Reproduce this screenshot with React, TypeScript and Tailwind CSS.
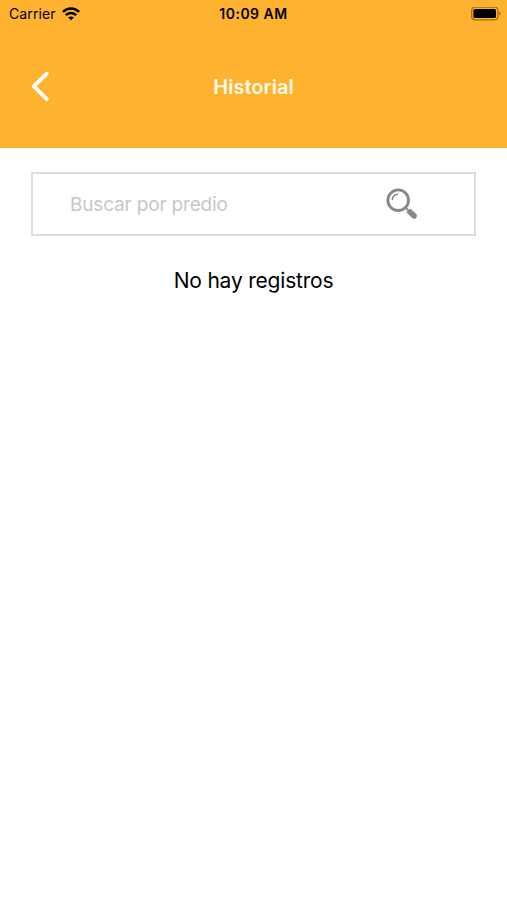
import { useState } from "react";

const WifiIcon = () => (
  <svg width="18" height="14" viewBox="0 0 18 14" fill="none" stroke="#000" strokeWidth="2.5">
    <path d="M0.9 4.9C5.5 0.2 12.5 0.2 17.1 4.9" />
    <path d="M3.8 8.1C6.8 5.2 11.2 5.2 14.2 8.1" />
    <path d="M9 13.3L6.2 10.5C7.8 9 10.2 9 11.8 10.5Z" fill="#000" stroke="none" />
  </svg>
);

const BatteryIcon = () => (
  <svg width="31" height="14" viewBox="0 0 31 14">
    <rect x="0.7" y="0.2" width="26.2" height="12.6" rx="3.4" fill="none" stroke="#000" strokeOpacity="0.4" strokeWidth="1.2" />
    <rect x="2.4" y="1.9" width="22.6" height="9.2" rx="1.7" fill="#000" />
    <path d="M28.3 4.4C29.9 5 29.9 8 28.3 8.6Z" fill="#000" fillOpacity="0.45" />
  </svg>
);

const BackIcon = () => (
  <svg width="20" height="32" viewBox="0 0 20 32" fill="none" stroke="#fff" strokeWidth="3.8" strokeLinecap="round" strokeLinejoin="round">
    <path d="M16.8 2.7L3.8 15.4L16.8 28.2" />
  </svg>
);

const SearchIcon = () => (
  <svg width="32" height="32" viewBox="0 0 32 32" fill="none" stroke="#888" strokeLinecap="round">
    <circle cx="12.2" cy="12.2" r="10.3" strokeWidth="2.9" />
    <path d="M6.3 11.4C6.7 8.6 8.7 6.7 11.3 6.3" strokeWidth="1.6" />
    <path d="M19.6 19.6L22 22" strokeWidth="1.8" />
    <path d="M20.4 24.2L24.2 20.4L30.3 26.1C32.2 28.8 29.2 32 26.4 30.3Z" fill="#888" stroke="none" />
  </svg>
);

const StatusBar = () => (
  <div className="grid h-7 grid-cols-3 items-center pl-[9px] pr-[5px] text-black">
    <div className="flex items-center gap-1.5">
      <span className="text-[14px] leading-none tracking-[0.1px]">Carrier</span>
      <WifiIcon />
    </div>
    <span className="-ml-1 text-center text-[14px] leading-none font-semibold tracking-[0.5px]">10:09 AM</span>
    <div className="flex justify-end">
      <BatteryIcon />
    </div>
  </div>
);

export default function App() {
  const [query, setQuery] = useState("");

  return (
    <div className="h-[900px] w-full bg-white font-['Inter','Liberation_Sans',sans-serif]">
      <header className="h-[148px] bg-[#ffb230]">
        <StatusBar />
        <div className="grid h-[117px] grid-cols-[1fr_auto_1fr] items-center px-[30px]">
          <button aria-label="Volver" className="justify-self-start">
            <BackIcon />
          </button>
          <h1 className="text-[20px] leading-none font-semibold text-[#fffbea]">Historial</h1>
        </div>
      </header>

      <main className="px-[31px] pt-6">
        <div className="flex h-16 items-center border-2 border-[#dedede] pl-[37px] pr-[56px]">
          <input
            value={query}
            onChange={(e) => setQuery(e.target.value)}
            placeholder="Buscar por predio"
            className="min-w-0 flex-1 pt-0.5 text-[19px] tracking-[-0.17px] outline-none placeholder:text-[#c7c7c9]"
          />
          <SearchIcon />
        </div>
        <p className="mt-[31px] text-center text-[21px] leading-7 tracking-[-0.2px] text-black">No hay registros</p>
      </main>
    </div>
  );
}
